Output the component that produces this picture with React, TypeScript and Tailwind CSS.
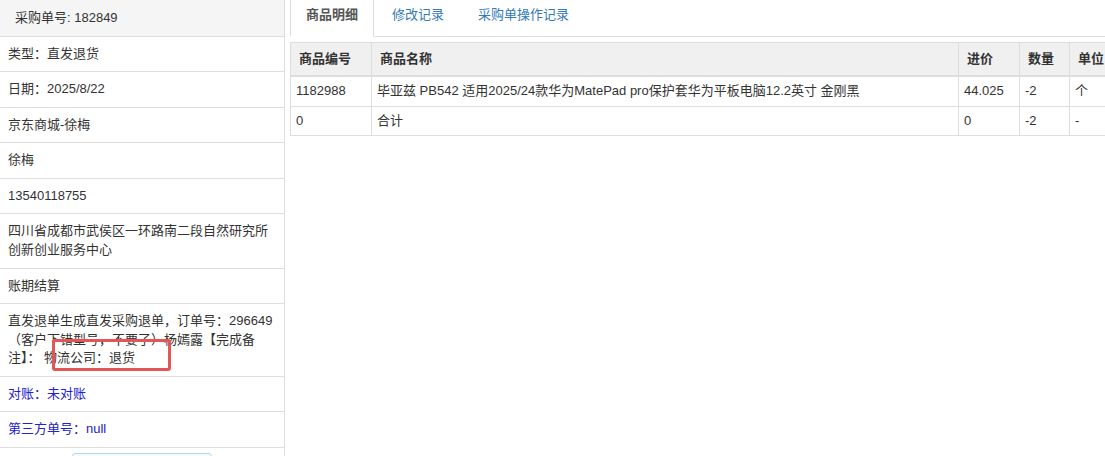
import React from "react";

const font = { fontFamily: '"Liberation Sans", "Noto Sans CJK SC", Arial, sans-serif' };

function Row({ children, blue }: { children: React.ReactNode; blue?: boolean }) {
  return (
    <div
      className={`border-b border-[#dddddd] px-[8px] py-[8px] text-[13px] leading-[1.42857] ${
        blue ? "text-[#2222cc]" : "text-[#333333]"
      }`}
    >
      {children}
    </div>
  );
}

export default function App() {
  const items = [
    { id: "1182988", name: "毕亚兹 PB542 适用2025/24款华为MatePad pro保护套华为平板电脑12.2英寸 金刚黑", price: "44.025", qty: "-2", unit: "个" },
    { id: "0", name: "合计", price: "0", qty: "-2", unit: "-" },
  ];
  return (
    <div className="relative flex h-[456px] w-[1105px] overflow-hidden bg-white" style={font}>
      {/* left panel */}
      <div className="relative w-[285px] shrink-0 border-r border-[#dddddd]">
        <div className="border-b border-[#dddddd] bg-[#f5f5f5] px-[15px] pb-[8px] pt-[9px] text-[13px] leading-[1.42857] text-[#333333]">
          采购单号: 182849
        </div>
        <Row>类型：直发退货</Row>
        <Row>日期：2025/8/22</Row>
        <Row>京东商城-徐梅</Row>
        <Row>徐梅</Row>
        <Row>13540118755</Row>
        <Row>四川省成都市武侯区一环路南二段自然研究所创新创业服务中心</Row>
        <Row>账期结算</Row>
        <Row>直发退单生成直发采购退单，订单号：296649（客户下错型号，不要了）杨嫣露【完成备注】： 物流公司：退货</Row>
        <Row blue>对账：未对账</Row>
        <Row blue>第三方单号：null</Row>
        <div className="mt-[5px] flex justify-center">
          <div className="h-[20px] w-[140px] rounded-t-[3px] border border-[#b9d7e8] bg-[#f3f9fc]" />
        </div>
        <div className="absolute left-[52px] top-[339px] h-[32px] w-[119px] rounded-[3px] border-[3px] border-[#e25656]" />
      </div>

      {/* right content */}
      <div className="flex-1 pl-[5px]">
        <div className="mt-[-5px] flex border-b border-[#dddddd]">
          <div className="mb-[-1px] mr-[2px] border border-b-transparent border-[#dddddd] bg-white px-[15px] py-[10px] text-[13px] font-bold leading-[1.42857] text-[#555555]">
            商品明细
          </div>
          <div className="mr-[2px] border border-transparent px-[15px] py-[10px] text-[13px] leading-[1.42857] text-[#337ab7]">
            修改记录
          </div>
          <div className="mr-[2px] border border-transparent px-[15px] py-[10px] text-[13px] leading-[1.42857] text-[#337ab7]">
            采购单操作记录
          </div>
        </div>
        <table className="mt-[5px] w-[845px] table-fixed border-collapse text-[13px] leading-[1.42857] text-[#333333]">
          <colgroup>
            <col className="w-[81px]" />
            <col className="w-[587px]" />
            <col className="w-[61px]" />
            <col className="w-[50px]" />
            <col className="w-[66px]" />
          </colgroup>
          <thead>
            <tr className="bg-[#f0f0f0]">
              {["商品编号", "商品名称", "进价", "数量", "单位"].map((h) => (
                <th
                  key={h}
                  className="border border-b-2 border-[#dddddd] px-[8px] py-[7px] text-left font-bold whitespace-nowrap"
                >
                  {h}
                </th>
              ))}
            </tr>
          </thead>
          <tbody>
            {items.map((it) => (
              <tr key={it.id}>
                <td className="border border-[#dddddd] px-[5px] py-[5px] whitespace-nowrap">{it.id}</td>
                <td className="border border-[#dddddd] px-[5px] py-[5px] whitespace-nowrap">{it.name}</td>
                <td className="border border-[#dddddd] px-[5px] py-[5px] whitespace-nowrap">{it.price}</td>
                <td className="border border-[#dddddd] px-[5px] py-[5px] whitespace-nowrap">{it.qty}</td>
                <td className="border border-[#dddddd] px-[5px] py-[5px] whitespace-nowrap">{it.unit}</td>
              </tr>
            ))}
          </tbody>
        </table>
      </div>
    </div>
  );
}
